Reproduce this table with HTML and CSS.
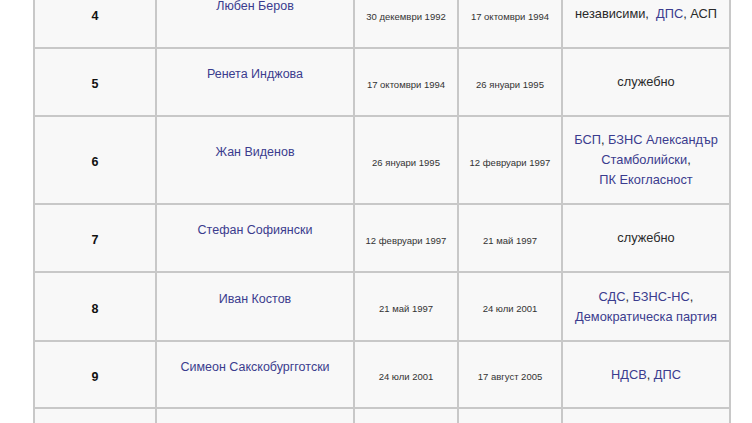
FILE: index.html
```html
<!DOCTYPE html>
<html lang="bg">
<head>
<meta charset="utf-8">
<link rel="stylesheet" href="styles.css">
</head>
<body>
<table class="pm">
  <colgroup>
    <col class="c-num"><col class="c-name"><col class="c-date"><col class="c-date"><col class="c-party">
  </colgroup>
  <tr class="tight">
    <td class="num">4</td>
    <td class="name"><a href="#">Любен Беров</a></td>
    <td class="date">30 декември 1992</td>
    <td class="date">17 октомври 1994</td>
    <td class="party">независими, &nbsp;<a href="#">ДПС</a>, АСП</td>
  </tr>
  <tr class="mid">
    <td class="num">5</td>
    <td class="name"><a href="#">Ренета Инджова</a></td>
    <td class="date">17 октомври 1994</td>
    <td class="date">26 януари 1995</td>
    <td class="party">служебно</td>
  </tr>
  <tr>
    <td class="num">6</td>
    <td class="name"><a href="#">Жан Виденов</a></td>
    <td class="date">26 януари 1995</td>
    <td class="date">12 февруари 1997</td>
    <td class="party"><a href="#">БСП</a>, <a href="#">БЗНС Александър Стамболийски</a>,<br><a href="#">ПК Екогласност</a></td>
  </tr>
  <tr class="mid">
    <td class="num">7</td>
    <td class="name"><a href="#">Стефан Софиянски</a></td>
    <td class="date">12 февруари 1997</td>
    <td class="date">21 май 1997</td>
    <td class="party">служебно</td>
  </tr>
  <tr>
    <td class="num">8</td>
    <td class="name"><a href="#">Иван Костов</a></td>
    <td class="date">21 май 1997</td>
    <td class="date">24 юли 2001</td>
    <td class="party"><a href="#">СДС</a>, <a href="#">БЗНС-НС</a>,<br><a href="#">Демократическа партия</a></td>
  </tr>
  <tr class="short">
    <td class="num">9</td>
    <td class="name"><a href="#">Симеон Сакскобургготски</a></td>
    <td class="date">24 юли 2001</td>
    <td class="date">17 август 2005</td>
    <td class="party"><a href="#">НДСВ</a>, <a href="#">ДПС</a></td>
  </tr>
  <tr>
    <td class="num">10</td>
    <td class="name"><a href="#">Сергей Станишев</a></td>
    <td class="date">17 август 2005</td>
    <td class="date">27 юли 2009</td>
    <td class="party"><a href="#">БСП</a>, <a href="#">НДСВ</a>, <a href="#">ДПС</a></td>
  </tr>
</table>
</body>
</html>
```

FILE: styles.css
```css
html, body {
  margin: 0;
  padding: 0;
  background: #ffffff;
  overflow: hidden;
}

body {
  font-family: "Liberation Sans", Arial, sans-serif;
  color: #222222;
}

.pm {
  margin: -21px 0 0 33px;
  border-collapse: collapse;
  table-layout: fixed;
  width: 697px;
  background: #f8f8f8;
}

.c-num { width: 122px; }
.c-name { width: 198px; }
.c-date { width: 104px; }
.c-party { width: 168px; }

.pm tr {
  height: 69px;
}

.pm tr.tight {
  height: 68px;
}

.pm tr.mid {
  height: 68px;
}

.pm tr.short {
  height: 67px;
}

.pm td {
  border: 2px solid #c8c8c8;
  padding: 12px 6px;
  text-align: center;
  vertical-align: middle;
  line-height: 20px;
  font-size: 12.5px;
}

.pm a {
  color: #3b3c8e;
  text-decoration: none;
}

.pm td.num {
  font-weight: bold;
  color: #111111;
  padding-top: 16px;
}

.pm td.name {
  padding-bottom: 28px;
}

.pm td.date {
  font-size: 9.5px;
  padding-top: 17px;
  color: #333333;
}

.pm td.party {
  font-size: 12.8px;
  padding-top: 13px;
  padding-bottom: 13px;
  color: #2a2a2a;
}
```
